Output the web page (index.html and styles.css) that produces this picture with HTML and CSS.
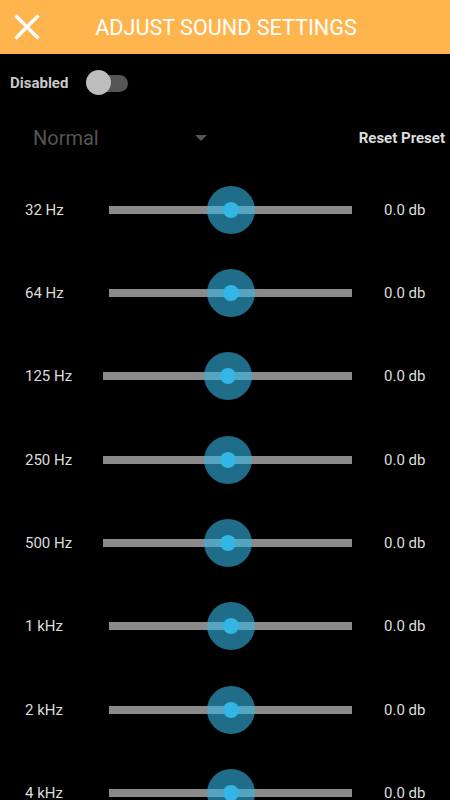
FILE: index.html
```html
<!DOCTYPE html>
<html>
<head>
    <link rel="stylesheet" href="styles.css">
</head>
<body>

<div class="header">
    <svg class="close-icon" width="26" height="26" viewBox="0 0 26 26">
        <path d="M1.5 1.5 L24.5 24.5 M24.5 1.5 L1.5 24.5" stroke="#fff" stroke-width="3.4" fill="none"/>
    </svg>
    <div class="title">ADJUST SOUND SETTINGS</div>
</div>

<div class="toggle-row">
    <span class="toggle-label">Disabled</span>
    <div class="switch">
        <div class="switch-track"></div>
        <div class="switch-thumb"></div>
    </div>
</div>

<div class="preset-row">
    <div class="preset-select">
        <span class="preset-name">Normal</span>
        <span class="preset-arrow"></span>
    </div>
    <span class="reset-btn">Reset Preset</span>
</div>

<div class="eq-list">
    <div class="eq-row">
        <span class="eq-label">32 Hz</span>
        <div class="eq-track"><div class="eq-thumb"><div class="eq-dot"></div></div></div>
        <span class="eq-value">0.0 db</span>
    </div>
    <div class="eq-row">
        <span class="eq-label">64 Hz</span>
        <div class="eq-track"><div class="eq-thumb"><div class="eq-dot"></div></div></div>
        <span class="eq-value">0.0 db</span>
    </div>
    <div class="eq-row wide">
        <span class="eq-label">125 Hz</span>
        <div class="eq-track"><div class="eq-thumb"><div class="eq-dot"></div></div></div>
        <span class="eq-value">0.0 db</span>
    </div>
    <div class="eq-row wide">
        <span class="eq-label">250 Hz</span>
        <div class="eq-track"><div class="eq-thumb"><div class="eq-dot"></div></div></div>
        <span class="eq-value">0.0 db</span>
    </div>
    <div class="eq-row wide">
        <span class="eq-label">500 Hz</span>
        <div class="eq-track"><div class="eq-thumb"><div class="eq-dot"></div></div></div>
        <span class="eq-value">0.0 db</span>
    </div>
    <div class="eq-row">
        <span class="eq-label">1 kHz</span>
        <div class="eq-track"><div class="eq-thumb"><div class="eq-dot"></div></div></div>
        <span class="eq-value">0.0 db</span>
    </div>
    <div class="eq-row">
        <span class="eq-label">2 kHz</span>
        <div class="eq-track"><div class="eq-thumb"><div class="eq-dot"></div></div></div>
        <span class="eq-value">0.0 db</span>
    </div>
    <div class="eq-row">
        <span class="eq-label">4 kHz</span>
        <div class="eq-track"><div class="eq-thumb"><div class="eq-dot"></div></div></div>
        <span class="eq-value">0.0 db</span>
    </div>
</div>

</body>
</html>
```

FILE: styles.css
```css
html, body {
    height: 100%;
    overflow: hidden;
}

body {
    margin: 0;
    background-color: #000;
    font-family: Roboto, "Liberation Sans", sans-serif;
    color: #ddd;
}

.header {
    display: grid;
    align-items: center;
    height: 54px;
    background-color: #ffb54e;
}

.close-icon {
    grid-area: 1 / 1;
    justify-self: start;
    margin-left: 14px;
}

.title {
    grid-area: 1 / 1;
    justify-self: center;
    margin-left: 2px;
    color: #fff;
    font-size: 21.6px;
}

.toggle-row {
    display: flex;
    align-items: center;
    height: 58px;
    padding-left: 10px;
}

.toggle-label {
    font-size: 15px;
    font-weight: bold;
    color: #c8c8c8;
}

.switch {
    position: relative;
    width: 42px;
    height: 26px;
    margin-left: 18px;
    display: flex;
    align-items: center;
}

.switch-track {
    width: 40px;
    height: 17px;
    margin-left: 2px;
    border-radius: 9px;
    background-color: #555;
}

/* thumb sits on top of the track */
.switch-thumb {
    position: absolute;
    left: 0;
    top: 0;
    width: 25px;
    height: 25px;
    border-radius: 50%;
    background-color: #bdbdbd;
}

.preset-row {
    display: flex;
    align-items: center;
    justify-content: space-between;
    height: 52px;
    padding-left: 33px;
    padding-right: 5px;
}

.preset-select {
    display: flex;
    align-items: center;
}

.preset-name {
    width: 162px;
    font-size: 20px;
    color: #555;
}

.preset-arrow {
    width: 0;
    height: 0;
    border-left: 6px solid transparent;
    border-right: 6px solid transparent;
    border-top: 6px solid #555;
}

.reset-btn {
    font-size: 15px;
    font-weight: bold;
    color: #ddd;
}

.eq-list {
    padding-top: 4px;
}

.eq-row {
    display: flex;
    align-items: center;
    height: 83.33px;
    padding-left: 25px;
}

.eq-label {
    width: 84px;
    font-size: 15px;
    color: #ddd;
}

.eq-row.wide .eq-label {
    width: 78px;
}

.eq-track {
    position: relative;
    flex: 1;
    height: 8px;
    margin-right: 32px;
    background-color: #8a8a8a;
}

.eq-thumb {
    position: absolute;
    left: 50%;
    top: 50%;
    width: 48px;
    height: 48px;
    margin-left: -24px;
    margin-top: -24px;
    border-radius: 50%;
    background-color: rgba(51, 181, 229, 0.6);
    display: flex;
    align-items: center;
    justify-content: center;
}

.eq-dot {
    width: 16px;
    height: 16px;
    border-radius: 50%;
    background-color: #33b5e5;
}

.eq-value {
    width: 66px;
    font-size: 15px;
    color: #ddd;
}
```
